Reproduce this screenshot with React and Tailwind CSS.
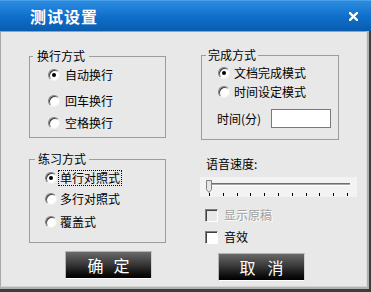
import React from 'react';

function Radio({ checked, label, focus, gap = 'gap-[5px]' }) {
    return (
        <div className={`flex items-center h-[16px] ${gap}`}>
            <span className="w-[12px] h-[12px] rounded-full bg-white border border-t-[#808080] border-l-[#808080] border-b-[#f0f0f0] border-r-[#f0f0f0] shadow-[inset_1px_1px_0_#404040] flex items-center justify-center shrink-0">
                {checked ? <span className="w-[4px] h-[4px] rounded-full bg-black" /> : null}
            </span>
            {focus === undefined ? (
                <span className="leading-[14px] whitespace-nowrap">{label}</span>
            ) : (
                <span className={`leading-[14px] whitespace-nowrap px-[1px] border ${focus ? 'border-dotted border-black' : 'border-transparent'}`}>
                    {label}
                </span>
            )}
        </div>
    );
}

function Check({ label, disabled }) {
    return (
        <div className="flex items-center h-[16px] gap-[6px] pl-[5px]">
            <span
                className={`w-[13px] h-[13px] border border-t-[#808080] border-l-[#808080] border-b-white border-r-white shadow-[inset_1px_1px_0_#404040] ${
                    disabled ? 'bg-[#e8e8e8]' : 'bg-white'
                }`}
            />
            <span
                className={`leading-[14px] ${disabled ? 'text-[#a0a0a0] [text-shadow:1px_1px_0_#ffffff]' : ''}`}
            >
                {label}
            </span>
        </div>
    );
}

function DarkButton({ left, right, gap }) {
    return (
        <button className="w-[87px] h-[28px] border border-t-[#b4b4b4] border-l-[#b4b4b4] border-r-[#d0d0d0] border-b-white bg-gradient-to-b from-[#6a6a6a] via-[#353535] to-[#020202] flex items-center justify-center text-white text-[16px] leading-none">
            <span className={`flex ${gap}`}>
                <span>{left}</span>
                <span>{right}</span>
            </span>
        </button>
    );
}

function Group({ title, className, legend = 'ml-[3px] px-[4px]', children }) {
    return (
        <fieldset className={`border border-[#9c9c9c] ${className}`}>
            <legend className={`leading-[14px] ${legend}`}>{title}</legend>
            {children}
        </fieldset>
    );
}

function Slider() {
    const ticks = [];
    for (let i = 0; i < 11; i++) {
        ticks.push(<rect key={i} x={Math.round(9 + i * 13.8)} y="16" width="1" height="3" fill="#000" />);
    }
    return (
        <div className="h-[20px] bg-[#f3f3f3]">
            <svg width="157" height="20" viewBox="0 0 157 20">
                <rect x="12" y="6" width="138" height="1" fill="#707070" />
                <rect x="12" y="7" width="138" height="1" fill="#a8a8a8" />
                <rect x="12" y="8" width="138" height="1" fill="#ffffff" />
                <polygon points="6.5,3.5 11.5,3.5 11.5,12.5 9,15.5 6.5,12.5" fill="#e6e6e6" stroke="#808080" />
                {ticks}
            </svg>
        </div>
    );
}

export default function App() {
    return (
        <div className="w-[371px] h-[292px] flex flex-col bg-[#3c3c3c] font-['Noto_Sans_CJK_SC',sans-serif] text-[12px] text-black">
            {/* title bar */}
            <div className="h-[31px] shrink-0 flex items-center justify-between pl-[30px] pr-[13px] bg-gradient-to-b from-[#2c8ce0] via-[#0f70cb] to-[#0a5cae] border-t border-t-[#4aa2ea]">
                <span className="text-white text-[16px] font-bold tracking-[1px] leading-none">测试设置</span>
                <svg width="9" height="9" viewBox="0 0 9 9">
                    <path d="M1 1 L8 8 M8 1 L1 8" stroke="#fff" strokeWidth="2.4" strokeLinecap="square" />
                </svg>
            </div>

            <div className="flex-1 flex flex-col pr-[2px] pb-[3px]">
                <div className="flex-1 flex flex-col border-r-2 border-b-2 border-[#b0b0b0]">
                    <div className="flex-1 flex bg-[#e8e8e8] border-t border-t-[#a0a0a0] border-l border-l-[#a8a8a8] border-r border-r-[#dcdcdc] border-b border-b-[#d4d4d4]">
                        {/* left column */}
                        <div className="w-[137px] ml-[28px] pt-[17px] flex flex-col">
                            <Group title="换行方式">
                                <div className="pl-[18px] pb-[6px]">
                                    <div className="mt-[4px]">
                                        <Radio checked label="自动换行" />
                                    </div>
                                    <div className="mt-[10px]">
                                        <Radio label="回车换行" />
                                    </div>
                                    <div className="mt-[6px]">
                                        <Radio label="空格换行" />
                                    </div>
                                </div>
                            </Group>

                            <Group title="练习方式" className="mt-[14px]" legend="ml-[5px] px-[3px]">
                                <div className="pl-[15px] pb-[12px]">
                                    <div className="mt-[4px]">
                                        <Radio checked focus label="单行对照式" gap="gap-[1px]" />
                                    </div>
                                    <div className="mt-[5px]">
                                        <Radio focus={false} label="多行对照式" gap="gap-[1px]" />
                                    </div>
                                    <div className="mt-[7px]">
                                        <Radio focus={false} label="覆盖式" gap="gap-[1px]" />
                                    </div>
                                </div>
                            </Group>

                            <div className="mt-[8px] pl-[36px]">
                                <DarkButton left="确" right="定" gap="gap-[10px]" />
                            </div>
                        </div>

                        {/* right column */}
                        <div className="w-[157px] ml-[34px] pt-[16px] flex flex-col">
                            <Group title="完成方式" className="ml-[1px] w-[138px]" legend="ml-[4px] px-[2px]">
                                <div className="pl-[16px] pr-[7px] pb-[11px]">
                                    <div className="mt-[3px]">
                                        <Radio checked label="文档完成模式" gap="gap-[4px]" />
                                    </div>
                                    <div className="mt-[3px]">
                                        <Radio label="时间设定模式" gap="gap-[4px]" />
                                    </div>
                                    <div className="mt-[9px] flex items-center justify-between -ml-[1px]">
                                        <span className="leading-[14px]">时间(分)</span>
                                        <span className="w-[60px] h-[19px] bg-white border border-[#7a7a7a]" />
                                    </div>
                                </div>
                            </Group>

                            <div className="mt-[17px] pl-[6px] leading-[14px]">语音速度:</div>
                            <div className="mt-[6px]">
                                <Slider />
                            </div>
                            <div className="mt-[10px]">
                                <Check disabled label="显示原稿" />
                            </div>
                            <div className="mt-[6px]">
                                <Check label="音效" />
                            </div>
                            <div className="mt-[8px] pl-[18px]">
                                <DarkButton left="取" right="消" gap="gap-[12px]" />
                            </div>
                        </div>
                    </div>
                </div>
            </div>
        </div>
    );
}
